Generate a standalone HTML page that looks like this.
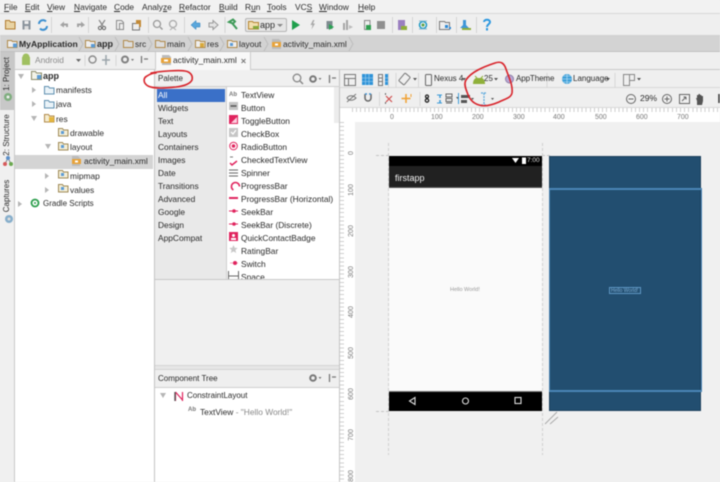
<!DOCTYPE html>
<html><head><meta charset="utf-8">
<style>
*{box-sizing:border-box;margin:0;padding:0}
html,body{width:720px;height:482px;overflow:hidden;background:#f0f0f0}
#r{position:relative;width:720px;height:482px;overflow:hidden;font-family:"Liberation Sans","Noto Sans CJK KR",sans-serif;font-size:8.4px;color:#2a2a2a;filter:blur(.4px)}
.a{position:absolute}
.t{position:absolute;white-space:nowrap;line-height:12px}
svg{position:absolute;overflow:visible}
u{text-decoration:underline}
.rt{position:absolute;font-size:7px;color:#777;transform:rotate(-90deg);width:20px;text-align:center;line-height:8px}
.rh{position:absolute;font-size:7px;color:#777;line-height:8px}
</style></head><body><div id="r">

<!-- menu -->
<div class="a" style="left:0;top:0;width:720px;height:14px;background:#f2f2f2;border-bottom:1px solid #d8d8d8"></div>
<div class="t" style="left:4px;top:1px"><u>F</u>ile</div>
<div class="t" style="left:25px;top:1px"><u>E</u>dit</div>
<div class="t" style="left:47px;top:1px"><u>V</u>iew</div>
<div class="t" style="left:74px;top:1px"><u>N</u>avigate</div>
<div class="t" style="left:114px;top:1px"><u>C</u>ode</div>
<div class="t" style="left:142px;top:1px">Analy<u>z</u>e</div>
<div class="t" style="left:179px;top:1px"><u>R</u>efactor</div>
<div class="t" style="left:219px;top:1px"><u>B</u>uild</div>
<div class="t" style="left:245px;top:1px">R<u>u</u>n</div>
<div class="t" style="left:267px;top:1px"><u>T</u>ools</div>
<div class="t" style="left:295px;top:1px">VC<u>S</u></div>
<div class="t" style="left:319px;top:1px"><u>W</u>indow</div>
<div class="t" style="left:358px;top:1px"><u>H</u>elp</div>

<!-- toolbar -->
<div class="a" style="left:0;top:14px;width:720px;height:22px;background:#efefef;border-bottom:1px solid #d0d0d0"></div>
<svg style="left:0;top:0" width="720" height="36" fill="none">
<path d="M5.500 20.500h4l1 1.500h4.500v7h-9.500z" stroke="#b07a2c" fill="#e9d3a3"/>
<path d="M22.500 20.500h8v9h-8z" fill="#8a939c"/><path d="M24.500 21h4v3h-4z" fill="#eee"/><path d="M24.500 26h4v3.500h-4z" fill="#ddd"/>
<path d="M39 24a4 4 0 0 1 7-2.500M47 26a4 4 0 0 1-7 2.500" stroke="#3c8fd0" stroke-width="2"/>
<path d="M60 25l4-3.500v2h4v3.500h-2v-1.500h-2v2z" fill="#a3a3a3"/>
<path d="M85 25l-4-3.500v2h-4v3.500h2v-1.500h2v2z" fill="#a3a3a3"/>
<path d="M99 20l4 6M105 20l-4 6" stroke="#888" stroke-width="1.200"/><circle cx="100" cy="28" r="1.600" stroke="#666"/><circle cx="104" cy="28" r="1.600" stroke="#666"/>
<path d="M116.500 20.500h5l2 2v7h-7z" stroke="#8c8c8c" fill="#eee"/><path d="M119.500 23.500h4v6h-4z" stroke="#8c8c8c"/>
<path d="M132.500 23.500h7v6.500h-7z" stroke="#777" fill="#eee"/><path d="M136 20h5v7h-2v-3h-3z" fill="#c28a37"/>
<circle cx="157" cy="24" r="3.500" stroke="#999" stroke-width="1.300"/><path d="M160 27l2.500 2.500" stroke="#999" stroke-width="1.500"/>
<circle cx="173" cy="24" r="3.500" stroke="#aaa" stroke-width="1.300"/><path d="M170 30l3-2.500 3 2.500" stroke="#aaa"/>
<path d="M191 25l5-4.500v2.500h4v4h-4v2.500z" fill="#5aa7dc" stroke="#2a7ab8" stroke-width=".5"/>
<path d="M218 25l-5-4.500v2.500h-4v4h4v2.500z" fill="#e4e4e4" stroke="#999"/>
<path d="M229 22l4-2.500 2 2-2 2zM232 23l5 6" stroke="#3e9a58" stroke-width="2"/>
<path d="M292 20l8 5-8 5z" fill="#1fa04c"/>
<path d="M313 20l-2.500 5h2l-1 4.500 3.500-6h-2l1.500-3.500z" fill="#a8a8a8"/>
<path d="M326.500 21h6v8h-6z" fill="#7f8b90"/><path d="M329 24l5 3-5 3z" fill="#2aa354"/>
<path d="M343 23h2v7h-2zM346 20h2v10h-2z" fill="#a6a6a6"/><path d="M349 25l4 2-4 2z" fill="#bbb"/>
<path d="M364.500 20.500h5.500v9h-5.500z" stroke="#888" fill="#eee"/><rect x="366" y="25" width="5" height="5" fill="#2f9e50"/>
<rect x="377" y="21" width="8" height="8" fill="#8f8f8f"/>
<path d="M398 20h7v10h-7z" fill="#9a7fc0"/><path d="M401 26h6v4h-6z" fill="#8fae3a"/>
<circle cx="423" cy="25" r="3.500" stroke="#1f9ac4" stroke-width="1.500"/><path d="M419 21l8 0M419 29h8" stroke="#86b8cd"/><circle cx="423" cy="25" r="1.500" fill="#5aa243"/>
<path d="M439.500 21.500h5l1 1h4v7h-10z" stroke="#777" fill="#eee"/><rect x="445" y="25" width="3" height="3" fill="#2c88d4"/><rect x="449" y="27" width="2" height="2" fill="#2c88d4"/>
<path d="M463 20h3v5l3 3h-9l3-3z" fill="#3e97d8"/><path d="M462 28h9v2h-9z" fill="#8fae3a"/>
<path d="M484 22c0-3 6-3 6 0 0 2-3 2.500-3 5" stroke="#2c98e0" stroke-width="2"/><rect x="486" y="28" width="2" height="2.500" fill="#2c98e0"/>
<path d="M51.500 17v16M88.500 17v16M148.500 17v16M184.500 17v16M225 17v16M392.500 17v16M412.500 17v16M436.500 17v16M456.500 17v16M476.500 17v16" stroke="#d4d4d4"/>
</svg>
<div class="a" style="left:245px;top:18px;width:42px;height:14px;border:1px solid #b5b5b5;border-radius:2px;background:#e6e6e6"></div>
<svg style="left:248px;top:20px" width="12" height="10"><path d="M.5 1.500h4l1 1h5v6.500h-10z" stroke="#b5852f" fill="#f2dfae"/><path d="M5 6h6v3h-6z" fill="#86a83a"/></svg>
<div class="t" style="left:260px;top:19px;font-size:9px">app</div>
<svg style="left:277px;top:24px" width="6" height="4"><path d="M0 0h6l-3 3z" fill="#888"/></svg>

<!-- nav bar -->
<div class="a" style="left:0;top:36px;width:720px;height:16px;background:#d3d3d3;border-bottom:1px solid #c2c2c2"></div>
<svg style="left:0;top:36px" width="360" height="16" fill="none">
<path d="M7.500 4.500h4l1 1h4.500v6h-9.500z" stroke="#b18a4a" fill="#eee"/><rect x="13" y="7.500" width="4" height="4" fill="#5b9bd5"/>
<path d="M85.500 4.500h4l1 1h4.500v6h-9.500z" stroke="#b18a4a" fill="#eee"/><rect x="91" y="8" width="4" height="3.500" fill="#5b9bd5"/>
<path d="M123.500 4.500h4l1 1h4.500v6h-9.500z" stroke="#b18a4a" fill="#ddd"/>
<path d="M155.500 4.500h4l1 1h4.500v6h-9.500z" stroke="#b18a4a" fill="#ddd"/>
<path d="M195.500 4.500h4l1 1h4.500v6h-9.500z" stroke="#b18a4a" fill="#eee"/><rect x="200" y="7" width="4" height="4" fill="#d9a93a"/>
<path d="M227.500 4.500h4l1 1h4.500v6h-9.500z" stroke="#b18a4a" fill="#eee"/><rect x="230" y="7" width="3" height="3" fill="#5b9bd5"/>
<path d="M272 3h7l2 2v8h-9z" fill="#bbb"/><rect x="272" y="6" width="9" height="5" fill="#e8a33a"/><rect x="275" y="7.500" width="3" height="2" fill="#fff"/>
<path d="M79 1l4 7-4 7M115 1l4 7-4 7M148 1l4 7-4 7M188 1l4 7-4 7M220 1l4 7-4 7M264 1l4 7-4 7M349 1l4 7-4 7" stroke="#bdbdbd"/>
</svg>
<div class="t" style="left:19px;top:38px;font-weight:bold;font-size:8.600px">MyApplication</div>
<div class="t" style="left:97px;top:38px;font-weight:bold;font-size:9px">app</div>
<div class="t" style="left:135px;top:38px">src</div>
<div class="t" style="left:167px;top:38px">main</div>
<div class="t" style="left:207px;top:38px">res</div>
<div class="t" style="left:239px;top:38px">layout</div>
<div class="t" style="left:283px;top:38px">activity_main.xml</div>

<!-- tab row -->
<div class="a" style="left:0;top:52px;width:720px;height:18px;background:#efefef;border-bottom:1px solid #c9c9c9"></div>
<div class="a" style="left:155px;top:52px;width:96px;height:18px;background:#f8f8f8;border-left:1px solid #ccc;border-right:1px solid #ccc"></div>
<svg style="left:0;top:52px" width="260" height="18" fill="none">
<path d="M22 5h8v5h-8z" fill="#a0c060"/><circle cx="26" cy="5" r="3.500" fill="#a0c060"/><path d="M22 10h8v3h-8z" fill="#a0c060"/>
<path d="M76 7h5l-2.500 3z" fill="#666"/>
<circle cx="92.500" cy="7.500" r="3.500" stroke="#8a8a8a" stroke-width="1.400"/>
<path d="M106 3v10M102 8h8" stroke="#9aa4aa" stroke-width="1.500"/>
<circle cx="125" cy="7.500" r="3" stroke="#808080" stroke-width="2"/><path d="M131 7h3l-1.500 2z" fill="#777"/>
<path d="M141.500 4v7M144 7h4" stroke="#777" stroke-width="1.300"/>
<path d="M85 3v11M116 3v11" stroke="#d5d5d5"/>
<path d="M162 3h7l2 2v8h-9z" fill="#bbb"/><rect x="161" y="6" width="10" height="5" fill="#e8a33a"/><rect x="164" y="7.500" width="4" height="2" fill="#fff"/>
<path d="M241.500 7l4 4M245.500 7l-4 4" stroke="#777"/>
</svg>
<div class="t" style="left:35px;top:54px;color:#8a8a8a">Android</div>
<div class="t" style="left:173px;top:54px">activity_main.xml</div>

<!-- left stripe -->
<div class="a" style="left:0;top:52px;width:15px;height:430px;background:#f0f0f0;border-right:1px solid #c9c9c9"></div>
<div class="a" style="left:0;top:52px;width:14px;height:58px;background:#c8c8c8"></div>
<div class="t" style="left:-17px;top:68px;width:48px;text-align:center;transform:rotate(-90deg);font-size:8px">1: Project</div>
<svg style="left:3px;top:92px" width="10" height="10"><circle cx="5" cy="5" r="4" fill="#7fae7f"/><circle cx="5" cy="5" r="1.500" fill="#eee"/></svg>
<div class="t" style="left:-15px;top:129px;width:44px;text-align:center;transform:rotate(-90deg);font-size:8px">2: Structure</div>
<svg style="left:3px;top:156px" width="10" height="11"><path d="M5 2L2 8M5 2l3 6" stroke="#888"/><circle cx="5" cy="2" r="2" fill="#5b8fc9"/><circle cx="2" cy="8" r="2" fill="#d65a5a"/><circle cx="8" cy="8" r="2" fill="#6aa84f"/></svg>
<div class="t" style="left:-14px;top:190px;width:42px;text-align:center;transform:rotate(-90deg);font-size:8px">Captures</div>
<svg style="left:4px;top:214px" width="10" height="10"><circle cx="5" cy="5" r="4" fill="#86aecb"/><circle cx="5" cy="5" r="1.500" fill="#ddd"/></svg>

<!-- project tree -->
<div class="a" style="left:15px;top:70px;width:139px;height:412px;background:#fff"></div>
<div class="a" style="left:15px;top:155px;width:138px;height:14px;background:#d4d4d4"></div>
<svg style="left:0;top:60px" width="154" height="170" fill="none">
<g fill="#b5b5b5">
<path d="M18 14h6l-3 5z"/><path d="M32 27l4 3-4 3zM32 41l4 3-4 3z"/><path d="M31 56h6l-3 5z"/><path d="M45 84h6l-3 5z"/><path d="M45 113l4 3-4 3zM45 127l4 3-4 3z"/><path d="M18 141l4 3-4 3z"/>
</g>
<path d="M31.500 11.500h4l1 1.500h5v6.500h-10z" stroke="#8a8a6a" fill="#f3f3e8"/><rect x="37" y="15" width="4" height="4" fill="#5b9bd5"/>
<path d="M44.500 26.500h4l1 1.500h4.500v6h-9.500z" stroke="#5f8fb0" fill="#eaf3f8"/>
<path d="M44.500 40.500h4l1 1.500h4.500v6h-9.500z" stroke="#5f8fb0" fill="#eaf3f8"/>
<path d="M44.500 54.500h4l1 1.500h4.500v6h-9.500z" stroke="#b18a4a" fill="#f5eccf"/><rect x="49" y="57" width="5" height="5" fill="#e4b63f"/>
<path d="M58.500 68.500h4l1 1.500h4.500v6h-9.500z" stroke="#9f8a55" fill="#f3eed8"/><rect x="61" y="71" width="3" height="3" fill="#5b9bd5"/>
<path d="M58.500 82.500h4l1 1.500h4.500v6h-9.500z" stroke="#9f8a55" fill="#f3eed8"/><rect x="61" y="85" width="3" height="3" fill="#5b9bd5"/>
<path d="M72 96h6l2 2v8h-8z" fill="#bbb"/><rect x="72" y="99" width="9" height="5" fill="#e8a33a"/><rect x="75" y="100.500" width="3" height="2" fill="#fff"/>
<path d="M58.500 110.500h4l1 1.500h4.500v6h-9.500z" stroke="#9f8a55" fill="#f3eed8"/><rect x="61" y="113" width="3" height="3" fill="#5b9bd5"/>
<path d="M58.500 124.500h4l1 1.500h4.500v6h-9.500z" stroke="#9f8a55" fill="#f3eed8"/><rect x="61" y="127" width="3" height="3" fill="#5b9bd5"/>
<circle cx="35" cy="143" r="3.500" stroke="#2e9e4e" stroke-width="1.800"/><circle cx="35" cy="143" r="1" fill="#2e9e4e"/>
</svg>
<div class="t" style="left:43px;top:70px;font-weight:bold;font-size:9px">app</div>
<div class="t" style="left:56px;top:84px">manifests</div>
<div class="t" style="left:56px;top:98px">java</div>
<div class="t" style="left:56px;top:113px">res</div>
<div class="t" style="left:70px;top:127px">drawable</div>
<div class="t" style="left:70px;top:141px">layout</div>
<div class="t" style="left:84px;top:155px">activity_main.xml</div>
<div class="t" style="left:70px;top:170px">mipmap</div>
<div class="t" style="left:70px;top:184px">values</div>
<div class="t" style="left:43px;top:198px;font-size:8px">Gradle Scripts</div>

<!-- palette -->
<div class="a" style="left:154px;top:70px;width:186px;height:412px;background:#f0f0f0;border-right:1px solid #c4c4c4;border-left:1px solid #c4c4c4"></div>
<div class="a" style="left:155px;top:87px;width:71px;height:192px;background:#e9e9e9"></div>
<div class="a" style="left:226px;top:87px;width:113px;height:192px;background:#fff;border-left:1px solid #cfcfcf;overflow:hidden"></div>
<div class="a" style="left:155px;top:86px;width:185px;height:1px;background:#cfcfcf"></div>
<div class="a" style="left:155px;top:279px;width:185px;height:1px;background:#c8c8c8"></div>
<div class="a" style="left:334px;top:87px;width:5px;height:36px;background:#ececec"></div>
<div class="a" style="left:157px;top:89px;width:68px;height:13px;background:#3a70c8"></div>
<div class="t" style="left:158px;top:73px;font-size:8px">Palette</div>
<svg style="left:290px;top:70px" width="50" height="18" fill="none">
<circle cx="7" cy="8" r="3.800" stroke="#888" stroke-width="1.300"/><path d="M10 11l3 3" stroke="#888" stroke-width="1.500"/>
<circle cx="23" cy="9" r="2.800" stroke="#777" stroke-width="2"/><path d="M28.500 8h3l-1.500 2z" fill="#777"/>
<path d="M39.500 5v8M42 8h4" stroke="#777" stroke-width="1.300"/>
</svg>
<div class="t" style="left:158px;top:89px;color:#fff">All</div>
<div class="t" style="left:158px;top:102px">Widgets</div>
<div class="t" style="left:158px;top:115px">Text</div>
<div class="t" style="left:158px;top:128px">Layouts</div>
<div class="t" style="left:158px;top:141px">Containers</div>
<div class="t" style="left:158px;top:154px">Images</div>
<div class="t" style="left:158px;top:167px">Date</div>
<div class="t" style="left:158px;top:180px">Transitions</div>
<div class="t" style="left:158px;top:193px">Advanced</div>
<div class="t" style="left:158px;top:206px">Google</div>
<div class="t" style="left:158px;top:219px">Design</div>
<div class="t" style="left:158px;top:232px">AppCompat</div>

<div class="a" style="left:226px;top:87px;width:108px;height:192px;overflow:hidden">
<div class="t" style="left:15px;top:2px">TextView</div>
<div class="t" style="left:15px;top:15px">Button</div>
<div class="t" style="left:15px;top:28px">ToggleButton</div>
<div class="t" style="left:15px;top:41px">CheckBox</div>
<div class="t" style="left:15px;top:54px">RadioButton</div>
<div class="t" style="left:15px;top:67px">CheckedTextView</div>
<div class="t" style="left:15px;top:80px">Spinner</div>
<div class="t" style="left:15px;top:93px">ProgressBar</div>
<div class="t" style="left:15px;top:106px">ProgressBar (Horizontal)</div>
<div class="t" style="left:15px;top:119px">SeekBar</div>
<div class="t" style="left:15px;top:132px">SeekBar (Discrete)</div>
<div class="t" style="left:15px;top:145px">QuickContactBadge</div>
<div class="t" style="left:15px;top:158px">RatingBar</div>
<div class="t" style="left:15px;top:171px">Switch</div>
<div class="t" style="left:15px;top:184px">Space</div>
<div class="t" style="left:3px;top:2px;font-size:6px;font-weight:bold;color:#777">Ab</div>
<svg style="left:0;top:0" width="15" height="195" fill="none">
<rect x="3" y="15" width="9" height="8" fill="#c4c4c4"/><path d="M4.500 19h6" stroke="#555" stroke-width="1.500"/>
<rect x="3" y="28" width="9" height="9" fill="#e0245e"/><path d="M5 36l6-6v6z" fill="#fbd0df"/>
<rect x="3" y="41" width="9" height="9" fill="#c6c6c6"/><path d="M5 45l2 2 3-4" stroke="#fff" stroke-width="1.300"/>
<circle cx="7.500" cy="59" r="3.800" stroke="#e0245e"/><circle cx="7.500" cy="59" r="1.800" fill="#e0245e"/>
<path d="M4 76l2 2 5-4" stroke="#e0245e" stroke-width="1.500"/><path d="M4 70h3" stroke="#777"/>
<path d="M3 83h9M3 86h9M3 89h9" stroke="#666"/>
<path d="M5 102a4 4 0 1 1 7 0" stroke="#e0245e" stroke-width="1.600" transform="rotate(-30 8 98)"/>
<path d="M3 111h9" stroke="#e0245e" stroke-width="2"/>
<path d="M3 124h9" stroke="#e0245e"/><circle cx="8" cy="124" r="1.800" fill="#e0245e"/>
<path d="M3 137h9" stroke="#e0245e"/><circle cx="8" cy="137" r="1.800" fill="#e0245e"/>
<rect x="3" y="145" width="9" height="9" fill="#e0245e"/><circle cx="7.500" cy="148.500" r="1.500" fill="#fff"/><rect x="5" y="151" width="5" height="2" fill="#fff"/>
<path d="M7.500 158l1.200 2.800 3 .2-2.300 2 .8 3-2.700-1.600-2.700 1.600.8-3-2.300-2 3-.2z" fill="#c8c8c8"/>
<path d="M4 176h8" stroke="#f0a5bd"/><circle cx="9" cy="176" r="2" fill="#e0245e"/>
<path d="M2.500 184v10M12.500 184v10M3 189h9" stroke="#666"/>
</svg>
</div>

<!-- divider and tree -->
<div class="a" style="left:155px;top:365px;width:184px;height:5px;background:#e6e6e6;border-top:1px solid #d4d4d4;border-bottom:1px solid #d4d4d4"></div>
<div class="a" style="left:155px;top:370px;width:184px;height:18px;background:#efefef;border-bottom:1px solid #cfcfcf"></div>
<div class="a" style="left:155px;top:388px;width:184px;height:94px;background:#fff"></div>
<div class="t" style="left:158px;top:373px;font-size:8px">Component Tree</div>
<svg style="left:150px;top:370px" width="190" height="50" fill="none">
<circle cx="163" cy="8" r="2.800" stroke="#777" stroke-width="2"/><path d="M168.500 7h3l-1.500 2z" fill="#777"/>
<path d="M179.500 4v8M182 7h4" stroke="#777" stroke-width="1.300"/>
<path d="M10 23h6l-3 5z" fill="#b5b5b5"/>
<path d="M25.500 22v9M25.500 22l7 8M32.500 22v9" stroke="#e0245e" stroke-width="1.200"/><path d="M25 22v9" stroke="#555" stroke-width="1.400"/>
</svg>
<div class="t" style="left:187px;top:390px;font-size:8px">ConstraintLayout</div>
<div class="t" style="left:188px;top:404px;font-size:6px;font-weight:bold;color:#777">Ab</div>
<div class="t" style="left:200px;top:406px">TextView <span style="color:#888">- "Hello World!"</span></div>

<!-- design toolbars -->
<div class="a" style="left:340px;top:70px;width:380px;height:18px;background:#efefef;border-bottom:1px solid #d8d8d8"></div>
<div class="a" style="left:340px;top:88px;width:380px;height:20px;background:#efefef;border-bottom:1px solid #d8d8d8"></div>
<svg style="left:340px;top:70px" width="380" height="38" fill="none">
<path d="M4.500 4.500h11v11h-11zM4.500 8.500h11M8.500 8.500v7" stroke="#777"/>
<rect x="22" y="4" width="11" height="11" fill="#2f93d8"/><path d="M22 8h11M22 11.500h11M25.500 4v11M29 4v11" stroke="#a9d4f0" stroke-width=".6"/>
<rect x="38.500" y="4.500" width="4" height="11" stroke="#777"/><rect x="45" y="4" width="4" height="11" fill="#2f93d8"/><path d="M38.500 8h4M38.500 11.500h4" stroke="#777"/><path d="M45 8h4M45 11.500h4" stroke="#bfe0f5" stroke-width=".6"/>
<rect x="61" y="4" width="7" height="10" rx="1" stroke="#777" transform="rotate(40 64.500 9)"/><path d="M73 8h4l-2 2.500z" fill="#555"/>
<rect x="85.500" y="4.500" width="6" height="11" rx="1" stroke="#666"/>
<path d="M122 8h4l-2 2.500z" fill="#555"/>
<path d="M133 14c0-3 1-5 3-6h6c2 1 3 3 3 6z" fill="#8fb03a"/><path d="M135 6l2 2M143 6l-2 2" stroke="#8fb03a"/>
<path d="M154 8h4l-2 2.500z" fill="#555"/>
<circle cx="169.500" cy="9" r="4" fill="#b9a8d6" stroke="#8f80a8"/>
<circle cx="227" cy="9" r="5" fill="#3c9fd8"/><path d="M222 9h10M227 4v10M223.500 6h7M223.500 12h7" stroke="#cfe8f7" stroke-width=".6"/>
<path d="M266 8h4l-2 2.500z" fill="#555"/>
<path d="M283.500 4.500h6v11h-6zM289.500 4.500h5v6h-5" stroke="#888"/><path d="M297 8h4l-2 2.500z" fill="#555"/>
<path d="M48.500 3v14M56 3v14M78.500 3v14M207 3v14M275 3v14" stroke="#d6d6d6"/>
<path d="M7 28c2-3 6-3 9 0-3 3-7 3-9 0z" stroke="#777"/><path d="M7 32l9-8" stroke="#777"/>
<path d="M25 24v4a3 3 0 0 0 6 0v-4" stroke="#666" stroke-width="1.500"/><path d="M25 24h2M29 24h2" stroke="#3c8fd0" stroke-width="1.500"/>
<path d="M46 26l6 6M52 26l-6 6" stroke="#d05050" stroke-width="1.200"/><path d="M45 24h1M45 33h1" stroke="#444" stroke-width="1.500"/>
<path d="M66 24v9M61.500 28.500h9" stroke="#f0a030" stroke-width="1.500"/><path d="M71 24v3" stroke="#f0a030"/>
<circle cx="87" cy="26.500" r="1.500" stroke="#222" stroke-width="1.300"/><circle cx="87" cy="30.500" r="1.700" stroke="#222" stroke-width="1.300"/>
<path d="M106 24h6v3h-6zM106 28.500h6v3h-6zM106 33h6" stroke="#666"/><path d="M100 25v3M100 30v3" stroke="#3c9bd8" stroke-width="1.500"/>
<path d="M97 25h5M97 33h5" stroke="#3c9bd8"/>
<path d="M116 27h3l-1.500 2z" fill="#555"/>
<path d="M118.500 23v11" stroke="#3c9bd8"/><path d="M121 25h9v3h-9zM121 30h6v3h-6z" fill="#555"/>
<path d="M131 28h3l-1.500 2z" fill="#555"/>
<path d="M141 23h6M141 35h6M144 23v12" stroke="#5aa8dc" stroke-dasharray="2 1" stroke-width="1.200"/>
<path d="M151 28h3l-1.500 2z" fill="#555"/>
<path d="M39.500 22v14M80 22v14" stroke="#d6d6d6"/>
<circle cx="291" cy="29" r="4.500" stroke="#666"/><path d="M288.500 29h5" stroke="#666"/>
<circle cx="327" cy="29" r="4.500" stroke="#666"/><path d="M324.500 29h5M327 26.500v5" stroke="#666"/>
<rect x="339.500" y="24.500" width="10" height="9" stroke="#666"/><path d="M342 31l4-4M346 27v2.500M346 27h-2.500" stroke="#666"/>
<path d="M357 35v-4l-1-3h1v-3h1.500v-1h1.500v1h1.500v1h1.500v5l-1 4z" fill="#555"/>
<path d="M379 24v9" stroke="#333" stroke-width="1.500"/>
</svg>
<div class="t" style="left:434px;top:73px;font-size:8px">Nexus 4</div>
<div class="t" style="left:484px;top:73px;font-size:8px">25</div>
<div class="t" style="left:516px;top:73px;font-size:8px;letter-spacing:-.1px">AppTheme</div>
<div class="t" style="left:573px;top:73px;font-size:8px">Language</div>
<div class="t" style="left:640px;top:92px;font-size:8.500px">29%</div>

<!-- canvas + rulers -->
<div class="a" style="left:340px;top:108px;width:380px;height:374px;background:#f0f0f0"></div>
<div class="a" style="left:340px;top:108px;width:380px;height:14px;background:#fff"></div>
<div class="a" style="left:340px;top:108px;width:15px;height:374px;background:#fff"></div>
<div class="a" style="left:352px;top:108px;width:368px;height:4px;background:repeating-linear-gradient(90deg,#cfcfcf 0 1px,transparent 1px 4.100px)"></div>
<div class="a" style="left:340px;top:122px;width:4px;height:360px;background:repeating-linear-gradient(180deg,#cfcfcf 0 1px,transparent 1px 4.100px)"></div>
<div class="rh" style="left:390px;top:114px">0</div>
<div class="rh" style="left:431px;top:114px">100</div>
<div class="rh" style="left:472px;top:114px">200</div>
<div class="rh" style="left:513px;top:114px">300</div>
<div class="rh" style="left:553px;top:114px">400</div>
<div class="rh" style="left:595px;top:114px">500</div>
<div class="rh" style="left:636px;top:114px">600</div>
<div class="rh" style="left:677px;top:114px">700</div>
<div class="rt" style="left:342px;top:149px">0</div>
<div class="rt" style="left:342px;top:186px">100</div>
<div class="rt" style="left:342px;top:227px">200</div>
<div class="rt" style="left:342px;top:268px">300</div>
<div class="rt" style="left:342px;top:308px">400</div>
<div class="rt" style="left:342px;top:349px">500</div>
<div class="rt" style="left:342px;top:390px">600</div>
<div class="rt" style="left:342px;top:431px">700</div>
<div class="rt" style="left:342px;top:472px">800</div>

<!-- phone -->
<div class="a" style="left:389px;top:156px;width:153px;height:255px;background:#fafafa"></div>
<div class="a" style="left:389px;top:156px;width:153px;height:10px;background:#000"></div>
<div class="a" style="left:389px;top:166px;width:153px;height:22px;background:#212121;border-bottom:1px solid #555"></div>
<div class="a" style="left:389px;top:391px;width:153px;height:20px;background:#000;border-top:1px solid #777"></div>
<div class="t" style="left:395px;top:172px;color:#f4f4f4;font-size:9px">firstapp</div>
<div class="t" style="left:527px;top:155px;color:#ddd;font-size:6.500px">7:00</div>
<svg style="left:510px;top:157px" width="18" height="8"><path d="M2 1h7l-3.500 5z" fill="#fff"/><rect x="12" y="0.500" width="4" height="6.500" fill="#fff"/></svg>
<div class="t" style="left:450px;top:284px;color:#999;font-size:5.500px">Hello World!</div>
<svg style="left:389px;top:391px" width="153" height="20" fill="none">
<path d="M26 4.500v7l-5.500-3.500z" stroke="#ddd" stroke-width="1.100" transform="translate(0 2)"/>
<circle cx="76.500" cy="10" r="3" stroke="#ddd" stroke-width="1.100"/>
<rect x="126" y="6.500" width="6" height="6" stroke="#ddd" stroke-width="1.100"/>
</svg>

<!-- blueprint -->
<div class="a" style="left:549px;top:156px;width:152px;height:255px;background:#224e70;border:1px solid #1c405c"></div>
<div class="a" style="left:549px;top:188px;width:153px;height:2px;background:#4b86b6"></div>
<div class="a" style="left:549px;top:390px;width:153px;height:2px;background:#4b86b6"></div>
<div class="a" style="left:549px;top:189px;width:1px;height:202px;background:#4b86b6"></div>
<div class="a" style="left:701px;top:189px;width:1px;height:202px;background:#4b86b6"></div>
<div class="a" style="left:609px;top:287px;width:32px;height:7px;border:1px solid #5f97c4"></div>
<div class="t" style="left:611px;top:285px;color:#7fb0d8;font-size:5px">Hello World!</div>

<!-- guides -->
<svg style="left:340px;top:130px" width="380" height="320" fill="none">
<path d="M48.500 13v312M202.500 13v312" stroke="#d0d0d0" stroke-dasharray="3 2"/>
<path d="M36 25.500h13M36 281.500h13" stroke="#c4c4c4" stroke-dasharray="3 2"/>
<path d="M202 25.500h8" stroke="#c4c4c4" stroke-dasharray="3 2"/>
<path d="M205 294l12-12M210 294l8-7" stroke="#aaa"/>
</svg>

<!-- red annotations -->
<svg style="left:0;top:0" width="720" height="482" fill="none" stroke="#d8232a" stroke-width="1.600" stroke-linecap="round">
<path d="M151 73c10-2 28-3 34-2 6 1 8 5 7 9-2 4-8 6-16 7-10 1-22 2-28-1-5-3-5-8-1-10 3-2 6-3 9-3"/>
<path d="M466 80c5-8 17-13 29-17 6-2 9 0 11 6 3 9 7 16 6 24-1 5-7 6-13 9-7 3-14 5-20 3-7-2-10-7-12-13-2-5-3-9-1-12"/>
</svg>

</div></body></html>
